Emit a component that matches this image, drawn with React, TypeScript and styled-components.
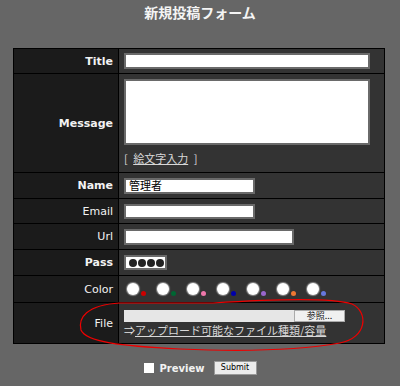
import React from 'react';
import styled, { createGlobalStyle } from 'styled-components';

const GlobalStyle = createGlobalStyle`
  html, body {
    margin: 0;
    padding: 0;
    background: #666666;
  }
  body {
    font-family: "DejaVu Sans", Verdana, sans-serif;
    color: #fff;
  }
`;

const Page = styled.div`
  position: relative;
  width: 400px;
  height: 386px;
  overflow: hidden;
`;

const Heading = styled.h1`
  margin: 0;
  height: 48px;
  box-sizing: border-box;
  padding-top: 2px;
  text-align: center;
  font-family: "Noto Sans CJK JP", sans-serif;
  font-size: 14px;
  font-weight: bold;
  line-height: 20px;
  color: #f4f4f4;
`;

const FormTable = styled.table`
  width: 372px;
  margin: 0 0 0 13px;
  border-collapse: separate;
  border-spacing: 1px;
  background: #000;
`;

const Label = styled.th<{ $bold?: boolean }>`
  width: 99px;
  padding: 0 5px 0 0;
  background: #1b1b1b;
  text-align: right;
  font-size: 11px;
  font-weight: ${p => (p.$bold ? 'bold' : 'normal')};
  color: #f2f2f2;
  vertical-align: middle;
`;

const Value = styled.td<{ $h: number; $top?: boolean }>`
  height: ${p => p.$h}px;
  padding: ${p => (p.$top ? '5px 0 0 5px' : '0 0 0 5px')};
  box-sizing: border-box;
  background: #333333;
  vertical-align: ${p => (p.$top ? 'top' : 'middle')};
`;

const TextBox = styled.div<{ $w: number; $h?: number }>`
  width: ${p => p.$w}px;
  height: ${p => p.$h ?? 15}px;
  box-sizing: border-box;
  background: #fff;
  border: 2px solid #6a6a6a;
  color: #000;
  font-family: "Noto Sans CJK JP", sans-serif;
  font-size: 11px;
  line-height: 11px;
  padding-left: 3px;
  overflow: hidden;
`;

const PassDots = styled.div`
  display: flex;
  gap: 1px;
  align-items: center;
  height: 100%;
`;

const PassDot = styled.span`
  width: 8px;
  height: 8px;
  border-radius: 50%;
  background: #222;
`;

const EmojiLine = styled.div`
  margin-top: 5px;
  font-size: 11px;
  color: #d8d8d8;
  font-family: "Noto Sans CJK JP", sans-serif;
  word-spacing: 3px;
`;

const JpLink = styled.a`
  color: #d8d8d8;
  text-decoration: underline;
`;

const ColorRow = styled.div`
  display: flex;
  align-items: center;
  padding-left: 3px;
`;

const ColorChoice = styled.span`
  display: flex;
  align-items: flex-end;
  width: 30px;
`;

const RadioCircle = styled.span`
  width: 12px;
  height: 12px;
  border-radius: 50%;
  background: #fff;
  box-shadow: 0 0 1px 1px rgba(200, 200, 200, 0.6);
`;

const Swatch = styled.span<{ $c: string }>`
  width: 5px;
  height: 5px;
  border-radius: 50%;
  background: ${p => p.$c};
  margin: 0 0 -1px 2px;
`;

const FileRow = styled.div`
  display: flex;
  margin-top: 1px;
`;

const FileField = styled.span`
  width: 170px;
  height: 12px;
  background: #e6e6e6;
`;

const BrowseButton = styled.span`
  width: 51px;
  height: 12px;
  box-sizing: border-box;
  background: #f0f0f0;
  border: 1px solid #aaa;
  color: #111;
  font-family: "Noto Sans CJK JP", sans-serif;
  font-size: 9px;
  line-height: 10px;
  text-align: center;
`;

const UploadLine = styled.div`
  margin-top: 1px;
  font-family: "Noto Sans CJK JP", sans-serif;
  font-size: 11px;
  line-height: 14px;
  color: #e6e6e6;
`;

const Footer = styled.div`
  display: flex;
  justify-content: center;
  align-items: center;
  margin-top: 17px;
  padding-left: 1px;
`;

const CheckBox = styled.span`
  width: 10px;
  height: 10px;
  background: #fff;
  margin-right: 5px;
`;

const PreviewText = styled.span`
  font-size: 10px;
  font-weight: bold;
  color: #f2f2f2;
  margin-right: 9px;
`;

const SubmitButton = styled.button`
  width: 43px;
  height: 14px;
  padding: 0;
  box-sizing: border-box;
  background: #ececec;
  border: 1px solid #999;
  color: #000;
  font-family: "DejaVu Sans", sans-serif;
  font-size: 8px;
  line-height: 12px;
`;

const Scribble = styled.svg`
  position: absolute;
  left: 0;
  top: 0;
  pointer-events: none;
`;

const swatches = ['#cc0000', '#006633', '#ee77aa', '#0000aa', '#9966cc', '#ee7733', '#6677dd'];

const App: React.FC = () => {
  return (
    <Page>
      <GlobalStyle />
      <Heading>新規投稿フォーム</Heading>
      <FormTable>
        <tbody>
          <tr>
            <Label $bold>Title</Label>
            <Value $h={24}>
              <TextBox $w={246} $h={16} />
            </Value>
          </tr>
          <tr>
            <Label $bold>Message</Label>
            <Value $h={98} $top>
              <TextBox $w={246} $h={66} />
              <EmojiLine>
                [ <JpLink>絵文字入力</JpLink> ]
              </EmojiLine>
            </Value>
          </tr>
          <tr>
            <Label $bold>Name</Label>
            <Value $h={25}>
              <TextBox $w={131} $h={16}>管理者</TextBox>
            </Value>
          </tr>
          <tr>
            <Label>Email</Label>
            <Value $h={24}>
              <TextBox $w={131} />
            </Value>
          </tr>
          <tr>
            <Label>Url</Label>
            <Value $h={25}>
              <TextBox $w={170} $h={16} />
            </Value>
          </tr>
          <tr>
            <Label $bold>Pass</Label>
            <Value $h={25}>
              <TextBox $w={43}>
                <PassDots>
                  <PassDot />
                  <PassDot />
                  <PassDot />
                  <PassDot />
                </PassDots>
              </TextBox>
            </Value>
          </tr>
          <tr>
            <Label>Color</Label>
            <Value $h={26}>
              <ColorRow>
                {swatches.map(c => (
                  <ColorChoice key={c}>
                    <RadioCircle />
                    <Swatch $c={c} />
                  </ColorChoice>
                ))}
              </ColorRow>
            </Value>
          </tr>
          <tr>
            <Label>File</Label>
            <Value $h={40}>
              <FileRow>
                <FileField />
                <BrowseButton>参照...</BrowseButton>
              </FileRow>
              <UploadLine>
                ⇒<JpLink>アップロード可能なファイル種類/容量</JpLink>
              </UploadLine>
            </Value>
          </tr>
        </tbody>
      </FormTable>
      <Footer>
        <CheckBox />
        <PreviewText>Preview</PreviewText>
        <SubmitButton>Submit</SubmitButton>
      </Footer>
      <Scribble width="400" height="386" viewBox="0 0 400 386">
        <path
          d="M 213 303 C 260 300, 330 297, 352 304 C 369 312, 367 338, 340 343 C 300 350, 250 352, 180 349 C 120 346, 86 342, 81 330 C 78 318, 86 305, 120 303 L 213 303"
          fill="none"
          stroke="#ee0000"
          strokeWidth="1.2"
        />
      </Scribble>
    </Page>
  );
};

export default App;
